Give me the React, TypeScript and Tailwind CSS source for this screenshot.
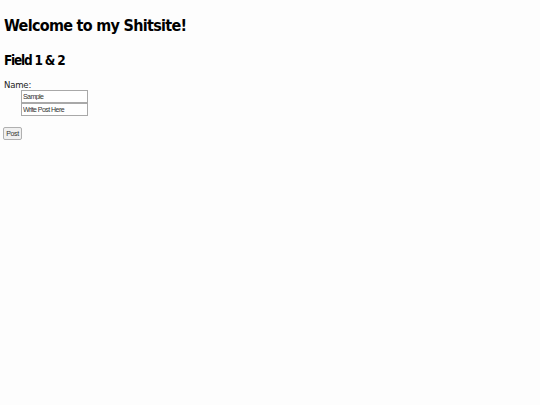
import React from 'react';

const fieldClass =
  "h-[13px] w-[67px] border border-[#a9a9a9] bg-white px-[1px] font-['Liberation_Sans',sans-serif] text-[7px] leading-[11px] tracking-[-0.55px] text-[#333] outline-none";

const App: React.FC = () => {
  return (
    <div className="min-h-[405px] bg-[#fdfdfd] px-1 pt-[16px] text-black">
      <h1 className="font-['DejaVu_Sans_Condensed','DejaVu_Sans',sans-serif] text-[16px] font-bold leading-[20px] tracking-[-0.7px]">
        Welcome to my Shitsite!
      </h1>
      <h2 className="mt-[16px] font-['DejaVu_Sans_Condensed','DejaVu_Sans',sans-serif] text-[13.5px] font-bold leading-[16px] tracking-[-1.2px]">
        Field 1 &amp; 2
      </h2>
      <form className="mt-[12px]" onSubmit={(e) => e.preventDefault()}>
        <div className="font-['DejaVu_Sans_Condensed','DejaVu_Sans',sans-serif] text-[9.5px] leading-[10px] tracking-[-0.2px] text-[#222]">Name:</div>
        <div className="ml-[17px] flex flex-col">
          <input type="text" defaultValue="Sample" className={fieldClass} />
          <input type="text" defaultValue="Write Post Here" className={fieldClass} />
        </div>
        <button
          type="submit"
          className="mt-[11px] -ml-px h-[13px] w-[19px] rounded-[2px] border border-[#b0b0b0] bg-[#f0f0f0] p-0 font-['Liberation_Sans',sans-serif] text-[7px] leading-[11px] tracking-[-0.4px] text-[#333]"
        >
          Post
        </button>
      </form>
    </div>
  );
};

export default App;
